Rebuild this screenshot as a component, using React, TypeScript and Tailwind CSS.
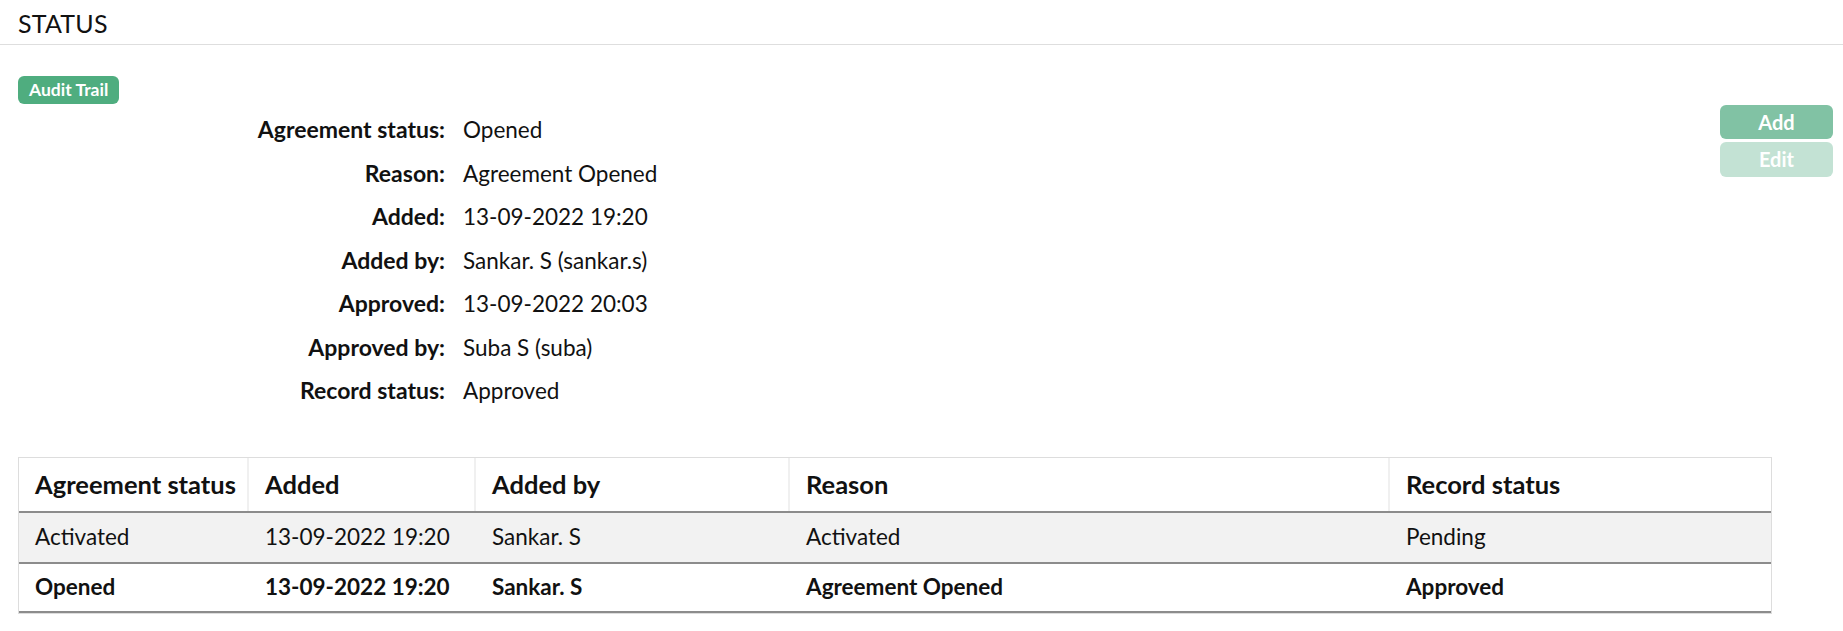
import React from "react";

const details: [string, string][] = [
  ["Agreement status:", "Opened"],
  ["Reason:", "Agreement Opened"],
  ["Added:", "13-09-2022 19:20"],
  ["Added by:", "Sankar. S (sankar.s)"],
  ["Approved:", "13-09-2022 20:03"],
  ["Approved by:", "Suba S (suba)"],
  ["Record status:", "Approved"],
];

const headers = ["Agreement status", "Added", "Added by", "Reason", "Record status"];
const rows = [
  { cells: ["Activated", "13-09-2022 19:20", "Sankar. S", "Activated", "Pending"], bold: false, bg: "bg-[#f2f2f2]" },
  { cells: ["Opened", "13-09-2022 19:20", "Sankar. S", "Agreement Opened", "Approved"], bold: true, bg: "bg-white" },
];

export default function App() {
  return (
    <div className="w-[1843px] h-[631px] bg-white text-[#111] font-['Lato',sans-serif] overflow-hidden">
      <div className="h-[45px] border-b border-[#dedede] pl-[18px] pt-[8px]">
        <div className="text-[25px] leading-[30px] font-normal tracking-[0.2px]">STATUS</div>
      </div>
      <div className="pl-[18px] pr-[10px]">
        <div className="mt-[31px] flex">
          <span className="h-[28px] px-[11px] rounded-[6px] bg-[#4fad7f] text-white text-[17.5px] font-bold leading-[28px]">
            Audit Trail
          </span>
        </div>
        <div className="flex items-start">
          <div className="flex-1 pt-[4px] grid grid-cols-[427px_1fr] gap-x-[18px]">
            {details.map(([k, v]) => (
              <React.Fragment key={k}>
                <div className="text-right font-bold text-[23px] leading-[43.5px]">{k}</div>
                <div className="text-[22.5px] leading-[43.5px]">{v}</div>
              </React.Fragment>
            ))}
          </div>
          <div className="w-[113px] flex flex-col gap-[3px] pt-[1px]">
            <button className="h-[34px] rounded-[6px] bg-[#81c2a4] text-white font-bold text-[20px] leading-[34px]">Add</button>
            <button className="h-[35px] rounded-[6px] bg-[#c3e2d4] text-white font-bold text-[20px] leading-[35px]">Edit</button>
          </div>
        </div>
        <div className="mt-[44px] w-[1754px] border border-[#dddddd]">
          <div className="grid grid-cols-[230px_227px_314px_600px_1fr] h-[55px] border-b-2 border-[#8c8c8c]">
            {headers.map((h, i) => (
              <div
                key={h}
                className={
                  "flex items-center pl-[16px] font-bold text-[25.5px] " +
                  (i < headers.length - 1 ? "border-r-2 border-[#f0f0f0]" : "")
                }
              >
                {h}
              </div>
            ))}
          </div>
          {rows.map((r, ri) => (
            <div
              key={ri}
              className={
                "grid grid-cols-[230px_227px_314px_600px_1fr] border-b-2 border-[#8c8c8c] " +
                r.bg +
                (ri === 0 ? " h-[51px]" : " h-[49px]")
              }
            >
              {r.cells.map((c, ci) => (
                <div
                  key={ci}
                  className={"flex items-center pl-[16px] text-[22.5px] " + (r.bold ? "font-bold" : "font-normal")}
                >
                  {c}
                </div>
              ))}
            </div>
          ))}
        </div>
      </div>
    </div>
  );
}
